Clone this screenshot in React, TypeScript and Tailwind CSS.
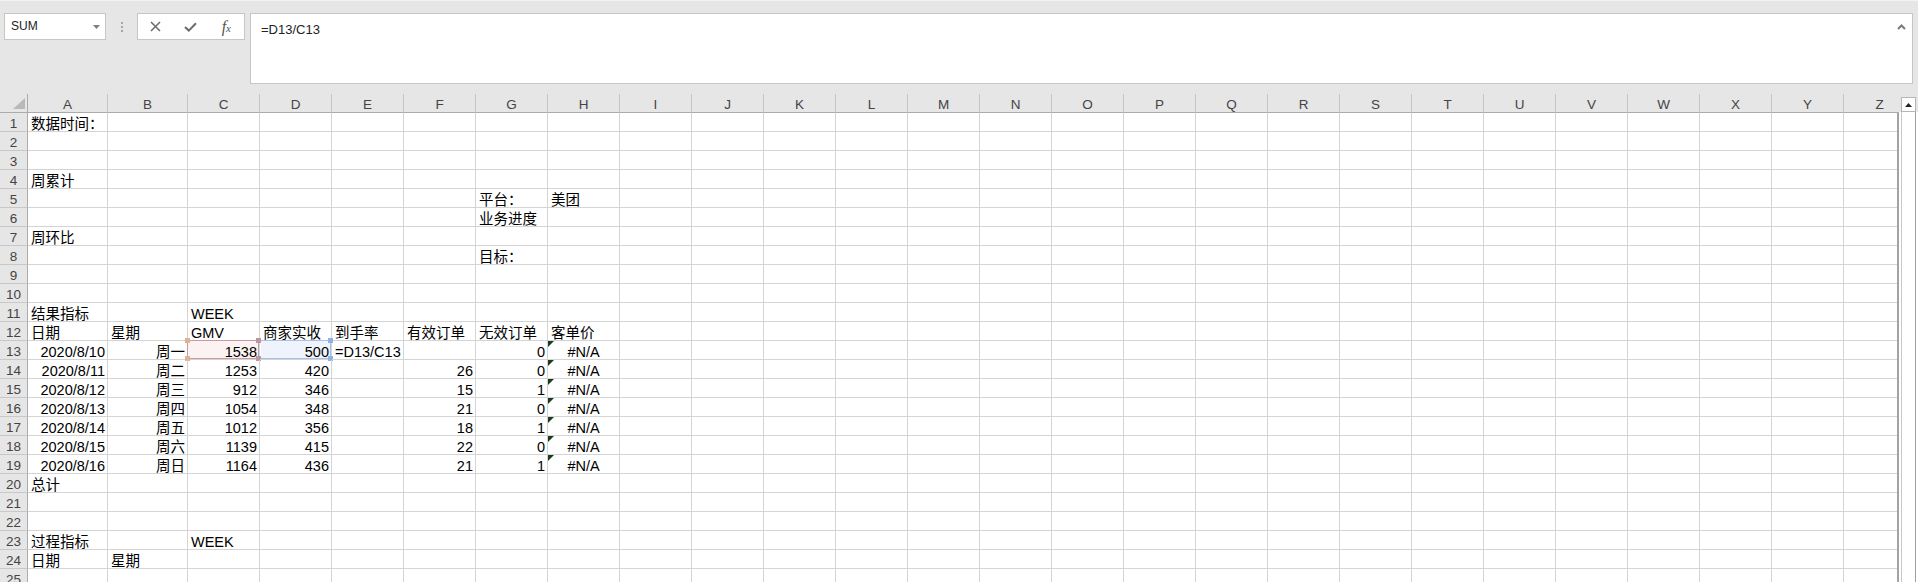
import React from "react";

const COLS = "ABCDEFGHIJKLMNOPQRSTUVWXYZ".split("");

type CellDef = { t: string; a?: "l" | "r" | "c"; err?: boolean };

const data: Record<string, CellDef> = {
  "1A": { t: "数据时间：" },
  "4A": { t: "周累计" },
  "5G": { t: "平台：" },
  "5H": { t: "美团" },
  "6G": { t: "业务进度" },
  "7A": { t: "周环比" },
  "8G": { t: "目标：" },
  "11A": { t: "结果指标" },
  "11C": { t: "WEEK" },
  "12A": { t: "日期" },
  "12B": { t: "星期" },
  "12C": { t: "GMV" },
  "12D": { t: "商家实收" },
  "12E": { t: "到手率" },
  "12F": { t: "有效订单" },
  "12G": { t: "无效订单" },
  "12H": { t: "客单价" },
  "13E": { t: "=D13/C13" },
  "20A": { t: "总计" },
  "23A": { t: "过程指标" },
  "23C": { t: "WEEK" },
  "24A": { t: "日期" },
  "24B": { t: "星期" },
};

const dates = ["2020/8/10", "2020/8/11", "2020/8/12", "2020/8/13", "2020/8/14", "2020/8/15", "2020/8/16"];
const days = ["周一", "周二", "周三", "周四", "周五", "周六", "周日"];
const gmv = ["1538", "1253", "912", "1054", "1012", "1139", "1164"];
const net = ["500", "420", "346", "348", "356", "415", "436"];
const valid = ["", "26", "15", "21", "18", "22", "21"];
const invalid = ["0", "0", "1", "0", "1", "0", "1"];

dates.forEach((d, i) => {
  const r = 13 + i;
  data[`${r}A`] = { t: d, a: "r" };
  data[`${r}B`] = { t: days[i], a: "r" };
  data[`${r}C`] = { t: gmv[i], a: "r" };
  data[`${r}D`] = { t: net[i], a: "r" };
  if (valid[i]) data[`${r}F`] = { t: valid[i], a: "r" };
  data[`${r}G`] = { t: invalid[i], a: "r" };
  data[`${r}H`] = { t: "#N/A", a: "c", err: true };
});

const alignCls: Record<string, string> = {
  l: "text-left pl-[3px]",
  r: "text-right pr-[2px]",
  c: "text-center",
};

const FONT = "font-['Liberation_Sans','Noto_Sans_CJK_SC',sans-serif]";

function Cell({ row, col }: { row: number; col: string }) {
  const key = `${row}${col}`;
  const def = data[key];
  const selC = key === "13C";
  const selD = key === "13D";
  return (
    <div
      className={`relative h-[19px] border-r border-b border-[#d4d4d4] whitespace-nowrap text-[14.5px] leading-[22px] text-[#000] ${
        alignCls[def?.a ?? "l"]
      }`}
    >
      {selC && (
        <div className="absolute -left-[1px] -top-[1px] right-0 bottom-0 z-0 border border-[#c99aa2] bg-[#fcf2f1]">
          <div className="absolute -left-[3px] -top-[3px] w-[5px] h-[5px] bg-[#dcb394]" />
          <div className="absolute -left-[3px] -bottom-[3px] w-[5px] h-[5px] bg-[#dcb394]" />
          <div className="absolute -right-[3px] -top-[3px] w-[5px] h-[5px] bg-[#b8979f]" />
          <div className="absolute -right-[3px] -bottom-[3px] w-[5px] h-[5px] bg-[#b8979f]" />
        </div>
      )}
      {selD && (
        <div className="absolute left-[1px] -top-[1px] right-0 bottom-0 z-0 border border-l-0 border-[#a7bfe9] bg-[#eff3fc]">
          <div className="absolute -right-[3px] -top-[3px] w-[5px] h-[5px] bg-[#8fb1e6]" />
          <div className="absolute -right-[3px] -bottom-[3px] w-[5px] h-[5px] bg-[#8fb1e6]" />
        </div>
      )}
      {def?.err && (
        <div className="absolute left-0 top-0 w-0 h-0 border-t-[6px] border-r-[6px] border-t-[#1b3b1f] border-r-transparent" />
      )}
      {def && <span className="relative z-10">{def.t}</span>}
    </div>
  );
}

function XIcon() {
  return (
    <svg width="11" height="11" viewBox="0 0 11 11">
      <path d="M1 1 L10 10 M10 1 L1 10" stroke="#6b6b6b" strokeWidth="1.5" fill="none" />
    </svg>
  );
}

function CheckIcon() {
  return (
    <svg width="13" height="10" viewBox="0 0 13 10">
      <path d="M1 5 L4.8 8.6 L12 1.2" stroke="#6b6b6b" strokeWidth="2" fill="none" />
    </svg>
  );
}

export default function App() {
  const rows = Array.from({ length: 25 }, (_, i) => i + 1);
  return (
    <div className={`w-[1918px] h-[582px] overflow-hidden bg-[#e6e6e6] flex flex-col ${FONT}`}>
      {/* Formula bar area */}
      <div className="h-[94px] shrink-0 flex items-start pt-[12px] pl-[4px] border-t border-[#f2f2f2]">
        <div className="w-[102px] h-[27px] bg-white border border-[#c6c6c6] flex items-center justify-between pl-[6px] pr-[5px]">
          <span className="text-[12px] text-[#222] leading-[25px]">SUM</span>
          <svg width="7" height="4" viewBox="0 0 7 4">
            <path d="M0 0 L7 0 L3.5 4 Z" fill="#7f7f7f" />
          </svg>
        </div>
        <div className="w-[31px] h-[27px] flex flex-col items-center justify-center gap-[2px]">
          <div className="w-[2px] h-[2px] bg-[#a6a6a6]" />
          <div className="w-[2px] h-[2px] bg-[#a6a6a6]" />
          <div className="w-[2px] h-[2px] bg-[#a6a6a6]" />
        </div>
        <div className="w-[108px] h-[27px] bg-white border border-[#c6c6c6] flex items-center">
          <div className="w-[36px] flex justify-center">
            <XIcon />
          </div>
          <div className="w-[36px] flex justify-center">
            <CheckIcon />
          </div>
          <div className="w-[36px] flex justify-center">
            <span className="font-['Liberation_Serif',serif] italic text-[16px] text-[#555] leading-none">
              f<span className="text-[11px]">x</span>
            </span>
          </div>
        </div>
        <div className="ml-[5px] w-[1663px] h-[71px] bg-white border border-[#c6c6c6] flex items-start justify-between pl-[10px] pr-[6px]">
          <span className="text-[13px] text-[#222] leading-[31px]">=D13/C13</span>
          <svg className="mt-[10px]" width="9" height="6" viewBox="0 0 9 6">
            <path d="M1 5 L4.5 1.5 L8 5" stroke="#7a7a7a" strokeWidth="2" fill="none" />
          </svg>
        </div>
      </div>

      {/* Sheet area */}
      <div className="flex-1 flex min-h-0">
        <div className="w-[1899px] flex flex-col min-h-0">
          {/* Column headers */}
          <div className="w-[1899px] overflow-hidden shrink-0">
            <div className="grid grid-cols-[28px_80px_80px_repeat(24,72px)] w-[1916px]">
              <div className="relative h-[19px] border-r border-b border-r-[#ababab] border-b-[#ababab]">
                <svg className="absolute right-[2px] bottom-[3px]" width="12" height="11" viewBox="0 0 12 11">
                  <path d="M12 0 L12 11 L0 11 Z" fill="#b9b9b9" />
                </svg>
              </div>
              {COLS.map((c) => (
                <div
                  key={c}
                  className="h-[19px] border-r border-b border-r-[#c4c4c4] border-b-[#ababab] text-center text-[13.5px] leading-[22px] text-[#444]"
                >
                  {c}
                </div>
              ))}
            </div>
          </div>
          {/* Body */}
          <div className="flex-1 min-h-0 w-[1899px] overflow-hidden border-r-2 border-[#a3a3a3] bg-white">
            <div className="grid grid-cols-[28px_80px_80px_repeat(24,72px)] w-[1916px]">
              {rows.map((r) => (
                <React.Fragment key={r}>
                  <div className="h-[19px] bg-[#e6e6e6] border-r border-b border-r-[#ababab] border-b-[#c8c8c8] text-center text-[13.5px] leading-[22px] text-[#444]">
                    {r}
                  </div>
                  {COLS.map((c) => (
                    <Cell key={c} row={r} col={c} />
                  ))}
                </React.Fragment>
              ))}
            </div>
          </div>
        </div>

        {/* Vertical scrollbar */}
        <div className="w-[19px] flex flex-col">
          <div className="h-[18px] pt-[3px] pl-[2px] shrink-0">
            <div className="w-[15px] h-[15px] bg-white border border-[#b5b5b5] flex items-center justify-center">
              <svg width="7" height="4" viewBox="0 0 7 4">
                <path d="M0 4 L7 4 L3.5 0 Z" fill="#222" />
              </svg>
            </div>
          </div>
          <div className="flex-1 bg-white pl-[2px]">
            <div className="w-[15px] h-full border-x border-l-[#c8c8c8] border-r-[#a0a0a0]" />
          </div>
        </div>
      </div>
    </div>
  );
}
